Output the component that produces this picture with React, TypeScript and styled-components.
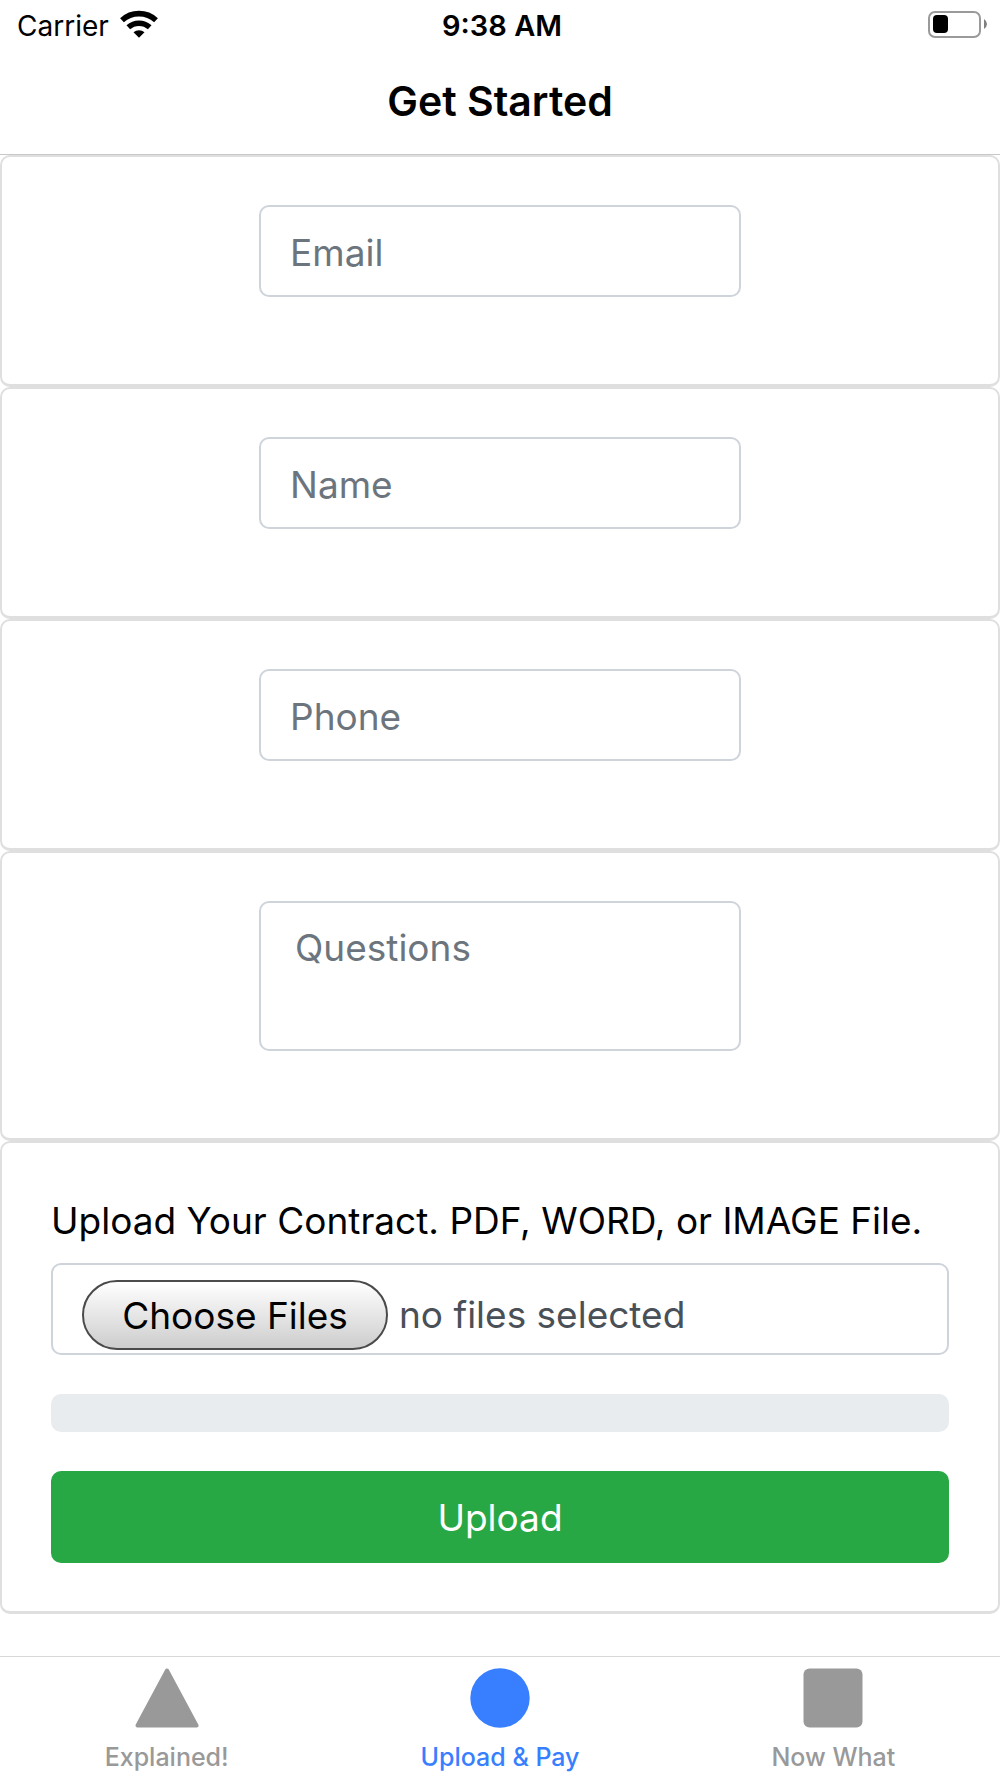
import React, { useState } from "react";
import styled, { createGlobalStyle } from "styled-components";

const GlobalStyle = createGlobalStyle`
  *, *::before, *::after { box-sizing: border-box; }
  body {
    margin: 0;
    background: #fff;
    color: #000;
    font-family: Inter, "Liberation Sans", sans-serif;
  }
  button, input, textarea { font: inherit; }
`;

const Screen = styled.div`
  display: flex;
  flex-direction: column;
  min-height: 100vh;
`;

const StatusBar = styled.div`
  display: grid;
  grid-template-columns: 1fr auto 1fr;
  align-items: center;
  height: 50px;
  padding: 0 13px 0 17px;
  font-size: 28px;
  line-height: 36px;
`;

const Carrier = styled.div`
  display: flex;
  align-items: center;
  gap: 11px;
`;

const CarrierName = styled.span`
  padding-top: 2px;
`;

const Time = styled.time`
  padding-top: 2px;
  font-size: 29px;
  font-weight: 600;
`;

const BatterySlot = styled.div`
  display: flex;
  justify-content: flex-end;
`;

const Header = styled.header`
  display: flex;
  align-items: center;
  justify-content: center;
  height: 105px;
  padding-bottom: 3px;
  border-bottom: 1px solid #c8c8c8;
`;

const Title = styled.h1`
  margin: 0;
  font-size: 41px;
  font-weight: 600;
  line-height: 48px;
`;

const Content = styled.form`
  flex: 1;
`;

const Card = styled.section`
  display: flex;
  flex-direction: column;
  padding: 48px 49px;
  border: solid #dfdfdf;
  border-width: 2px 2px 3px;
  border-radius: 10px;
`;

const FieldCard = styled(Card)`
  align-items: center;
  padding-bottom: 87px;
`;

const fieldFrame = `
  display: block;
  border: 2px solid #ced4da;
  border-radius: 10px;
  background: #fff;
  color: #495057;
  font-size: 37px;
  line-height: 56px;
`;

const TextInput = styled.input`
  ${fieldFrame}
  width: 482px;
  max-width: 100%;
  height: 92px;
  padding: 17px 29px 15px;
  &::placeholder { color: #6c757d; opacity: 1; }
`;

const TextArea = styled.textarea`
  ${fieldFrame}
  width: 482px;
  max-width: 100%;
  height: 150px;
  padding: 17px 34px 15px;
  resize: none;
  &::placeholder { color: #6c757d; opacity: 1; }
`;

const UploadLabel = styled.label`
  padding-top: 2px;
  margin-bottom: 14px;
  font-size: 37px;
  line-height: 56px;
`;

const FileField = styled.div`
  ${fieldFrame}
  position: relative;
  display: flex;
  align-items: center;
  gap: 11px;
  height: 92px;
  padding: 12px 29px 0;
  overflow: hidden;
`;

const FileInput = styled.input`
  position: absolute;
  inset: 0;
  width: 100%;
  height: 100%;
  opacity: 0;
  cursor: pointer;
`;

const ChooseFiles = styled.span`
  flex: none;
  width: 306px;
  height: 70px;
  border: 2px solid #4a4a4a;
  border-radius: 35px;
  background: linear-gradient(#fff, #cdcdcd);
  color: #000;
  line-height: 68px;
  text-align: center;
`;

const Progress = styled.div`
  height: 38px;
  margin: 39px 0;
  border-radius: 10px;
  background: #e9ecef;
`;

const UploadButton = styled.button`
  height: 92px;
  padding: 2px 0 0;
  border: 0;
  border-radius: 10px;
  background: #28a745;
  color: #fff;
  font-size: 37px;
  line-height: 56px;
`;

const TabBar = styled.nav`
  display: grid;
  grid-template-columns: repeat(3, 1fr);
  height: 122px;
  border-top: 1px solid #d8d8d8;
`;

const Tab = styled.a<{ $active?: boolean }>`
  display: flex;
  flex-direction: column;
  align-items: center;
  gap: 13px;
  padding-top: 11px;
  color: ${(p) => (p.$active ? "#387fff" : "#999")};
  font-size: 25px;
  font-weight: 500;
  line-height: 32px;
  text-decoration: none;
`;

const WifiIcon = () => (
  <svg width="38" height="30" viewBox="0 -2 38 30" aria-hidden="true">
    <g fill="none" stroke="#000">
      <path d="M2 8.300A25 25 0 0 1 36 8.300" strokeWidth="5.600" />
      <path d="M8.300 15.300A16 16 0 0 1 29.700 15.300" strokeWidth="5.400" />
    </g>
    <path d="M13.500 20.300A8.500 8.500 0 0 1 24.500 20.300L19 25.800Z" />
  </svg>
);

const BatteryIcon = () => (
  <svg width="60" height="28" viewBox="0 0 60 28" aria-hidden="true">
    <rect x="2" y="1" width="51" height="25" rx="6" fill="none" stroke="#9a9a9a" strokeWidth="2" />
    <rect x="6" y="4" width="15" height="18" rx="4" />
    <path d="M57 8Q60 10 60 13T57 18Z" fill="#808080" />
  </svg>
);

const TriangleIcon = () => (
  <svg width="64" height="60" viewBox="0 0 64 60" aria-hidden="true">
    <path d="M32 2.500L61.500 57.500H2.500Z" fill="currentColor" stroke="currentColor" strokeWidth="4" strokeLinejoin="round" />
  </svg>
);

const CircleIcon = () => (
  <svg width="60" height="60" viewBox="0 0 60 60" aria-hidden="true">
    <circle cx="30" cy="30" r="29.700" fill="currentColor" />
  </svg>
);

const SquareIcon = () => (
  <svg width="60" height="60" viewBox="0 0 60 60" aria-hidden="true">
    <rect x="0.500" y="0.500" width="59" height="59" rx="6" fill="currentColor" />
  </svg>
);

const fields = [
  { name: "email", type: "email", label: "Email" },
  { name: "name", type: "text", label: "Name" },
  { name: "phone", type: "tel", label: "Phone" },
];

const tabs = [
  { href: "#explained", label: "Explained!", Icon: TriangleIcon },
  { href: "#upload", label: "Upload & Pay", Icon: CircleIcon, active: true },
  { href: "#next", label: "Now What", Icon: SquareIcon },
];

export default function App() {
  const [count, setCount] = useState(0);

  return (
    <Screen>
      <GlobalStyle />
      <StatusBar>
        <Carrier>
          <CarrierName>Carrier</CarrierName>
          <WifiIcon />
        </Carrier>
        <Time>9:38 AM</Time>
        <BatterySlot>
          <BatteryIcon />
        </BatterySlot>
      </StatusBar>
      <Header>
        <Title>Get Started</Title>
      </Header>
      <Content onSubmit={(e) => e.preventDefault()}>
        {fields.map((f) => (
          <FieldCard key={f.name}>
            <TextInput type={f.type} name={f.name} placeholder={f.label} aria-label={f.label} />
          </FieldCard>
        ))}
        <FieldCard>
          <TextArea name="questions" placeholder="Questions" aria-label="Questions" />
        </FieldCard>
        <Card>
          <UploadLabel htmlFor="contract">Upload Your Contract. PDF, WORD, or IMAGE File.</UploadLabel>
          <FileField>
            <ChooseFiles>Choose Files</ChooseFiles>
            <span>{count ? `${count} files selected` : "no files selected"}</span>
            <FileInput
              id="contract"
              type="file"
              multiple
              onChange={(e) => setCount(e.target.files?.length ?? 0)}
            />
          </FileField>
          <Progress role="progressbar" aria-label="Upload progress" aria-valuenow={0} />
          <UploadButton type="submit">Upload</UploadButton>
        </Card>
      </Content>
      <TabBar>
        {tabs.map(({ href, label, Icon, active }) => (
          <Tab key={href} href={href} $active={active} aria-current={active ? "page" : undefined}>
            <Icon />
            {label}
          </Tab>
        ))}
      </TabBar>
    </Screen>
  );
}
